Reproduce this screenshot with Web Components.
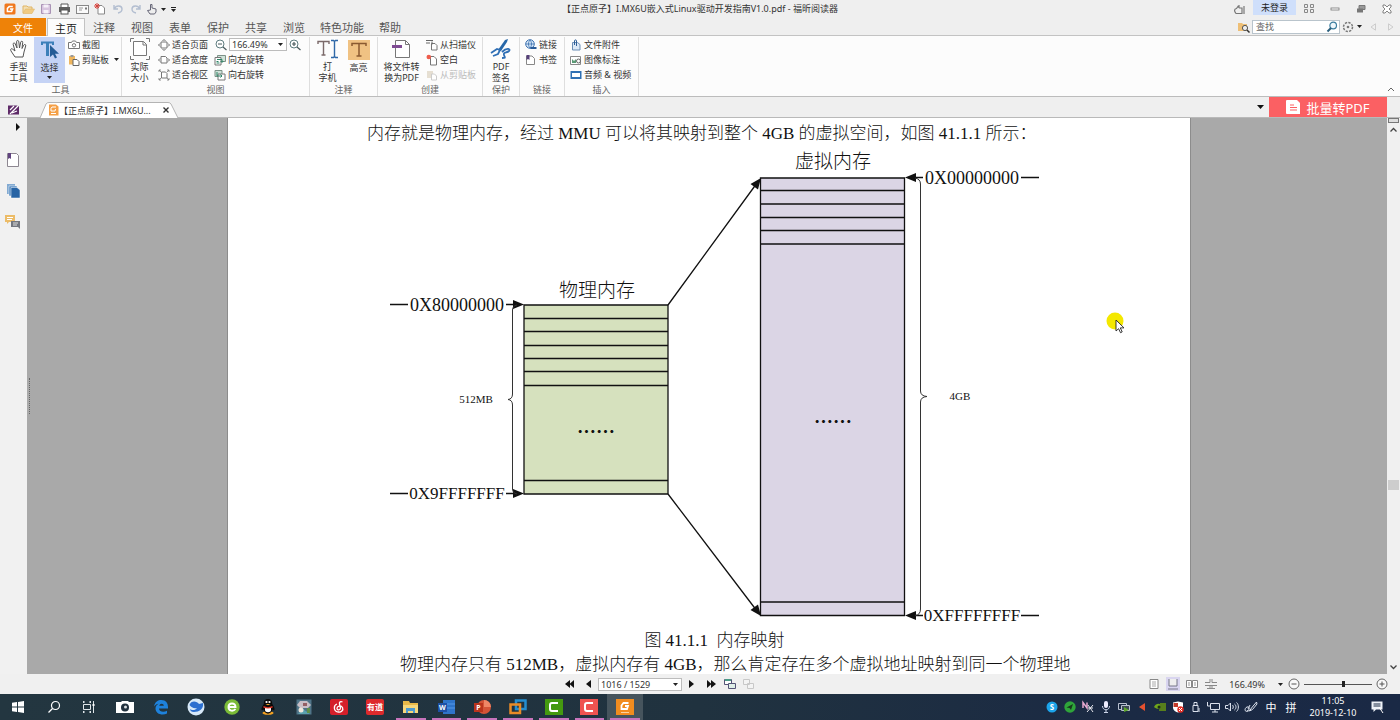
<!DOCTYPE html>
<html lang="zh-CN">
<head>
<meta charset="utf-8">
<title>【正点原子】I.MX6U嵌入式Linux驱动开发指南V1.0.pdf - 福昕阅读器</title>
<style>
html, body { height: 100%; margin: 0; }
body { overflow: hidden; font-family: "Noto Sans", "Noto Sans CJK SC", sans-serif; font-size: 9px; color: #333; }
</style>
</head>
<body>
<reader-app></reader-app>
<script>
const BASE = `
  *, *::before, *::after { box-sizing: border-box; }
  :host { display: block; box-sizing: border-box; }
  button, select, input { font: inherit; color: inherit; margin: 0; padding: 0; border: 0; background: none; line-height: inherit; border-radius: 0; }
  button { display: flex; align-items: center; justify-content: center; white-space: nowrap; }
`;
function define(name, css, html, init) {
  const template = document.createElement('template');
  template.innerHTML = `<style>${BASE}${css}</style>${html}`;
  customElements.define(name, class extends HTMLElement {
    constructor() {
      super();
      this.attachShadow({ mode: 'open' }).append(template.content.cloneNode(true));
    }
    connectedCallback() { if (init) init.call(this, this.shadowRoot); }
  });
}

/* name: [width, height, svg body] */
const ICONS = {
  foxit: [12, 12, '<rect x="0.5" y="0.5" width="11" height="11" rx="1.5" fill="#f0781e"/><path d="M8.8 3.6H5.2L3.4 5.4v3h4.2l1-2.4H6" fill="none" stroke="#fff" stroke-width="1.5"/>'],
  open: [13, 12, '<path d="M1 10V3h4l1 1h4v2" fill="#f3dfb4" stroke="#e0b565"/><path d="M1 10.500L3.500 6H12.500L10 10.500Z" fill="#f0cb84" stroke="#e0b565" stroke-width=".6"/>'],
  save: [12, 12, '<path d="M1.500 1.500h9v9h-9z" fill="#d8c5df" stroke="#a993b5"/><rect x="3.500" y="1.500" width="5" height="3" fill="#f5f0f8"/><rect x="3.500" y="7" width="5" height="3.500" fill="#f5f0f8"/>'],
  print: [13, 12, '<path d="M3 4V1h7v3" fill="#fff" stroke="#555"/><rect x="1" y="4" width="11" height="5" fill="#606060"/><rect x="3" y="7" width="7" height="4" fill="#fff" stroke="#555"/>'],
  mail: [13, 12, '<rect x=".5" y="2.500" width="12" height="8" fill="#fafafa" stroke="#888"/><path d="M3 5h4M3 7h3" stroke="#999"/><path d="M9 4.500h2v2H9z" fill="#777"/>'],
  newpdf: [12, 12, '<path d="M4 2.500h4l2.500 2.500v6h-6.500z" fill="#fff" stroke="#888"/><path d="M3 0v6M0 3h6M1 1l4 4M5 1L1 5" stroke="#d8413a"/>'],
  undo: [12, 12, '<path d="M2 2v4h4M2.500 5.500C4 2 10 2 10 6c0 2-1.500 3.500-4 4" fill="none" stroke="#b3bed0" stroke-width="1.4"/>'],
  redo: [12, 12, '<path d="M10 2v4H6M9.500 5.500C8 2 2 2 2 6c0 2 1.500 3.500 4 4" fill="none" stroke="#b3bed0" stroke-width="1.4"/>'],
  touch: [12, 12, '<path d="M4.500 7V1.500h1.500V5l4 1v3l-1.500 2H4L1.500 7.500z" fill="#eee" stroke="#667" stroke-width="1"/>'],
  down: [5, 3, '<path d="M0 0h5L2.500 3z" fill="#222"/>'],
  custom: [5, 5, '<path d="M0 .5h5" stroke="#222"/><path d="M0 2h5L2.500 5z" fill="#222"/>'],
  skin: [12, 12, '<path d="M2 10.500C0 8 0 6 2.500 5.500L4 3.500 5.500 5H8v5.500zM5 4V2M10 3v8" fill="none" stroke="#777" stroke-width="1.2"/>'],
  gridfour: [12, 10, '<path d="M1.500.5h3v3h-3zM7.500.5h3v3h-3zM1.500 5.500h3v3h-3zM7.500 5.500h3v3h-3z" fill="none" stroke="#888"/>'],
  min: [10, 10, '<rect x="1" y="4" width="8" height="2" fill="#fff" stroke="#777" stroke-width=".8"/>'],
  restore: [10, 10, '<path d="M3 1.500h6v4H3z" fill="#999" stroke="#777"/><path d="M1 4.500h6v4H1z" fill="#777"/>'],
  close: [10, 10, '<path d="M1 1h2l2 2 2-2h2v2L7 5l2 2v2H7L5 7 3 9H1V7l2-2-2-2z" fill="#fff" stroke="#666" stroke-width=".8"/>'],
  findfolder: [13, 12, '<path d="M1 10V2h4l1 1h4v7z" fill="#eebf76"/><circle cx="8" cy="7" r="2.600" fill="#eee" stroke="#555"/><path d="M10 9l2.500 2.500" stroke="#333" stroke-width="1.500"/>'],
  magnify: [12, 12, '<circle cx="7.200" cy="4.500" r="3.300" fill="#eef6fb" stroke="#3b7d9f" stroke-width="1.200"/><path d="M5 7L1.500 10.500" stroke="#2b5f7c" stroke-width="2"/>'],
  gear: [12, 12, '<circle cx="6" cy="6" r="4.500" fill="none" stroke="#777" stroke-width="1.500" stroke-dasharray="2.300 1.200"/><circle cx="6" cy="6" r="1.300" fill="#777"/>'],
  prevtri: [6, 8, '<path d="M5.500.8v6.400L1 4z" fill="none" stroke="#ccc"/>'],
  nexttri: [6, 8, '<path d="M.5.8v6.400L5 4z" fill="none" stroke="#ccc"/>'],
  hand: [20, 20, '<path d="M6 18l-4-6c-1-2 .5-3 1.700-1.800L6 12 4.200 5.500c-.4-1.800 1.500-2.200 2-.7L8 9 7.600 2.800c0-1.800 2-1.800 2.200 0L10.500 9l1.200-5.800c.4-1.600 2.300-1.200 2 .4L13 9.500l1.700-3.300c.9-1.400 2.500-.7 2 .8L15 13l-1 5z" fill="#fff" stroke="#555" stroke-width="1"/>'],
  select: [20, 20, '<path d="M1 5V1.500h13V5h-2V3.500H9V16H6V3.500H3V5z" fill="#3c7fb9"/><path d="M10 5v12l3-2.500 2 4 2-1-2-3.800h4z" fill="#255c96"/>'],
  camera: [12, 10, '<path d="M.5 2.500h3l1-1.500h3l1 1.500h3v6H.5z" fill="#fff" stroke="#777"/><circle cx="6" cy="5.300" r="1.700" fill="none" stroke="#777"/>'],
  clipboard: [12, 12, '<path d="M1 2h6v8.500H1z" fill="#efb65e"/><path d="M2.500 1h3v2h-3z" fill="#999"/><path d="M5 5.500h4l2 2v4H5z" fill="#fff" stroke="#666"/>'],
  actual: [20, 22, '<path d="M3.500 3.500h10l3 3v11h-13z" fill="#fff" stroke="#777"/><path d="M13 3.500v3.500h3.500M.5 4V.5H4M16 .5h3.500V4M.5 18v3.500H4M16 21.500h3.500V18" fill="none" stroke="#777"/>'],
  fitpage: [12, 12, '<path d="M3 3h6v6H3z" fill="#fff" stroke="#777"/><path d="M4.500 2L6 .5 7.500 2M4.500 10L6 11.500 7.500 10M2 4.500L.5 6 2 7.500M10 4.500L11.500 6 10 7.500" fill="none" stroke="#666"/>'],
  fitwidth: [12, 12, '<path d="M3 2.500h4.500l1.500 1.500v5H3z" fill="#fff" stroke="#777"/><path d="M2 4.500L.5 6 2 7.500M10 4.500L11.500 6 10 7.500" fill="none" stroke="#666"/>'],
  fitview: [12, 12, '<path d="M3.500 3h4l1.500 1.500V9H3.500z" fill="#fff" stroke="#777"/><path d="M1 1l2 2M11 1L9 3M1 11l2-2M11 11L9 9M1 3V1h2M11 3V1H9M1 9v2h2M11 9v2H9" fill="none" stroke="#777" stroke-width=".8"/>'],
  zoomout: [12, 12, '<circle cx="5" cy="5" r="4" fill="#fff" stroke="#5f7d80"/><path d="M3 5h4M8 8l3.500 3" stroke="#4a5a5c" stroke-width="1.200"/>'],
  zoomin: [12, 12, '<circle cx="5" cy="5" r="4" fill="#fff" stroke="#5f7d80"/><path d="M3 5h4M5 3v4M8 8l3.500 3" stroke="#4a5a5c" stroke-width="1.200"/>'],
  rotleft: [12, 12, '<path d="M3.500 1.500h8v6h-8z" fill="#cfe3d9" stroke="#7d9187"/><path d="M1 3.500h6v7.500H1z" fill="#fff" stroke="#777"/><path d="M3 5.500h5V8M6.500 7L8 8.500 9.500 7M2.500 7.500h2M2.500 9h3" fill="none" stroke="#2c8466"/>'],
  rotright: [12, 12, '<path d="M1 1.500h7v6H1z" fill="#cfe3d9" stroke="#7d9187"/><path d="M4 5h7v6H4z" fill="#fff" stroke="#777"/><path d="M3 3v4h5M6.500 5.500L8 7 6.500 8.500" fill="none" stroke="#2c8466"/>'],
  typewriter: [22, 20, '<path d="M1 5V2.500h11V5M6.500 2.500V16M4.500 16h4" fill="none" stroke="#7b6a6a" stroke-width="1.400"/><path d="M14 1.500h2.500l1 1 1-1H21M17.500 2v16M14 18.500h2.500l1-1 1 1H21" fill="none" stroke="#2f68a8" stroke-width="1.400"/>'],
  highlight: [24, 22, '<rect x="1" y="1" width="22" height="20" fill="#f0c283"/><path d="M5 7V4.500h14V7M12 4.500V17M9.500 17h5" fill="none" stroke="#8a5a30" stroke-width="1.500"/>'],
  topdf: [20, 20, '<path d="M3.500 1.500h10l4 4v13h-14z" fill="#fff" stroke="#777"/><path d="M13.500 1.500v4h4" fill="none" stroke="#777"/><rect x="0" y="6" width="10" height="3" fill="#7f4b93"/>'],
  scanner: [12, 12, '<path d="M5.500 4.500h3.500l2 2v4.500H5.500z" fill="#fff" stroke="#777"/><path d="M0 1.500h7M0 4h4M6 2.500v3" stroke="#666" fill="none"/>'],
  blank: [12, 12, '<path d="M4.500 2.500H8l2.500 2.500v6h-6z" fill="#fff" stroke="#777"/><circle cx="2.800" cy="3" r="2.300" fill="#ee5c4c"/>'],
  fromclip: [12, 12, '<path d="M1 2h6v7H1z" fill="#e6dfd2"/><path d="M5.500 5h3l2 2v4h-5z" fill="#fff" stroke="#ccc"/>'],
  sign: [22, 22, '<path d="M8 12L15 2l3-1-1 3-6 9z" fill="#2767a8"/><path d="M1 15l6-4 3 1-2 4-5 2M12 14c5-5 9-3 7-1s-6 1-5 4 2 3-2 3" fill="none" stroke="#2f6fb5" stroke-width="1.800"/>'],
  link: [12, 12, '<circle cx="5" cy="5" r="4.300" fill="#d9e9f8" stroke="#3a6fae"/><path d="M1 5h8M5 1c-2 2-2 6 0 8M5 1c2 2 2 6 0 8" stroke="#3a6fae" fill="none" stroke-width=".8"/><path d="M5.500 9h6" stroke="#295b98" stroke-width="2"/>'],
  bookmark: [11, 12, '<path d="M1.500 2h5.500l2.500 2.500v6h-8z" fill="#fff" stroke="#888"/><path d="M1.500 1h3v5L3 5 1.500 6z" fill="#56407a"/>'],
  attach: [12, 12, '<path d="M2.500 3.500h5l2.500 2v5.500H2.500z" fill="#dce9f7" stroke="#6a8db5"/><path d="M4.500 6V2c0-1.500 2-1.500 2 0v5" fill="none" stroke="#2f5f98"/>'],
  image: [12, 12, '<path d="M.5 2.500h10v8H.5z" fill="#fff" stroke="#888"/><path d="M2 9V5l2 2 2-2v4z" fill="#5b9b76"/><circle cx="8.500" cy="7" r="2" fill="#fff" stroke="#666"/>'],
  media: [12, 12, '<rect x=".5" y="2" width="11" height="8" fill="#2f70b3"/><rect x="2" y="4" width="8" height="4" fill="#fff"/>'],
  collapse: [8, 5, '<path d="M1 4l3-3 3 3" fill="none" stroke="#666"/>'],
  start: [13, 12, '<path d="M1 1.500h9l2 1v8H1z" fill="#5e2a68"/><path d="M3 10l8-8M3 6l4-4M5 9l5-2" stroke="#fff" stroke-width="1.200"/>'],
  docg: [11, 12, '<path d="M1 .5h7l2.500 2v9H1z" fill="#f5a046"/><path d="M8 3H4L3 4.500V7h4l.5-2M3 9.500h5" fill="none" stroke="#fff"/>'],
  x: [8, 8, '<path d="M1.500 1.500l5 5M6.500 1.500l-5 5" stroke="#333" stroke-width="1.400"/>'],
  bigdown: [7, 4, '<path d="M0 0h7L3.500 4z" fill="#111"/>'],
  pdfdoc: [14, 14, '<path d="M1 0h10l3 3v11H1a1 1 0 0 1-1-1V1a1 1 0 0 1 1-1z" fill="#fff"/><path d="M4 5h4M4 7.500h7M4 10h7" stroke="#fb6063"/>'],
  expand: [4, 8, '<path d="M0 0v8l4-4z" fill="#111"/>'],
  sidemark: [14, 16, '<path d="M1.500 1.500h9l2 2v11h-11z" fill="#fff" stroke="#8d8791"/><path d="M2 1h3v6L3.500 6 2 7z" fill="#614480"/>'],
  sidepages: [14, 16, '<path d="M1 1h8v10H1z" fill="#82aad2"/><path d="M3 3h8v10H3z" fill="#4d86c0" stroke="#fff" stroke-width=".5"/><path d="M5 4.500h6l3 2.500v8H5z" fill="#2764a5" stroke="#fff" stroke-width=".5"/>'],
  sidecomm: [16, 14, '<path d="M0 0h10v7H4L2 9V7H0z" fill="#ecbc68"/><path d="M2 2.500h6M2 4.500h5" stroke="#fff"/><path d="M6 6h9v8l-2-2H6z" fill="#73777f"/><path d="M8 8h5M8 10h4" stroke="#ddd"/>'],
  first: [10, 8, '<path d="M5 0v8L0 4zM9 0v8L4.500 4z" fill="#111"/>'],
  last: [10, 8, '<path d="M1 0v8l4.500-4zM5 0v8l5-4z" fill="#111"/>'],
  prev: [5, 8, '<path d="M5 0v8L0 4z" fill="#111"/>'],
  next: [5, 8, '<path d="M0 0v8l5-4z" fill="#111"/>'],
  viewback: [12, 12, '<path d="M.5 1.500h7v5h-7z" fill="#fff" stroke="#557"/><path d="M4.500 5.500h7v5h-7z" fill="#dfeee8" stroke="#557"/><path d="M1 2h6" stroke="#4a9a86" stroke-width="2"/>'],
  viewfwd: [12, 12, '<path d="M.5 1.500h6v5h-6zM4.500 5.500h6v5h-6z" fill="#f4f4f4" stroke="#c8c8c8"/>'],
  single: [10, 12, '<path d="M1 1.500h8v9H1z" fill="#fff" stroke="#888"/><path d="M3 4h4M3 6h4M3 8h4" stroke="#aaa"/>'],
  cont: [14, 14, '<rect width="14" height="14" fill="#d9d5f0"/><path d="M3 2v7h8V2" fill="#eee" stroke="#778"/><path d="M2 12h10" stroke="#778"/>'],
  facing: [12, 12, '<path d="M.5 2.500H5.500v7H.5zM6.500 2.500h5v7h-5z" fill="#fff" stroke="#888"/><path d="M2 5h2M2 7h2M8 5h2M8 7h2" stroke="#999"/>'],
  contfacing: [12, 12, '<path d="M0 4.500h5V1M12 4.500H7V1M0 7.500h12M5 8v3M7 8v3M2 10.500h8" fill="none" stroke="#888"/>'],
  minus: [12, 12, '<circle cx="6" cy="6" r="5" fill="#f8f8f8" stroke="#666"/><path d="M3.500 6h5" stroke="#555"/>'],
  plus: [12, 12, '<circle cx="6" cy="6" r="5" fill="#f8f8f8" stroke="#666"/><path d="M3.500 6h5M6 3.500v5" stroke="#555"/>'],
  scrollup: [9, 6, '<path d="M1.500 4.500L4.500 1.500l3 3" fill="none" stroke="#444" stroke-width="1.300"/>'],
  scrolldown: [9, 6, '<path d="M1.500 1.500L4.500 4.500l3-3" fill="none" stroke="#444" stroke-width="1.300"/>'],
  windows: [14, 14, '<path d="M1 2.800l5-.7v4.400H1zM7 2l6-.9v5.400H7zM1 7.500h5v4.400l-5-.7zM7 7.500h6V13l-6-.9z" fill="#fff"/>'],
  tsearch: [14, 14, '<circle cx="8.500" cy="5.500" r="4" fill="none" stroke="#fff" stroke-width="1.200"/><path d="M5.500 8.500L1.500 12.500" stroke="#fff" stroke-width="1.300"/>'],
  taskview: [14, 14, '<path d="M1.500 4.500h7v5h-7zM1 2h2M7 2h2M1 12h2M7 12h2M1.500 1v2M8.500 1v2M1.500 11v2M8.500 11v2M11.500 1v12" fill="none" stroke="#dfe5e9"/><path d="M10.500 4h2v2h-2z" fill="#fff"/>'],
  tcamera: [18, 14, '<path d="M0 2h5l1-1h6l1 1h5v11H0z" fill="#fff"/><circle cx="9" cy="7.500" r="4" fill="#22323f"/><circle cx="9.500" cy="7" r="1.500" fill="#d9dee2"/>'],
  edge: [16, 16, '<path d="M1 7.500C2 2.500 5 1 8.300 1 13 1 15 4.300 15 8v1.500H6c.2 3.500 4.800 4 8 2.200V14.500c-5 2.500-11.500.3-11.500-5 0-2 1-3.700 3-4.700C3.500 5 2 6.200 1 7.500zM6.200 6.800h4.600C10.800 4 6.800 4 6.200 6.800z" fill="#1e82dc"/>'],
  swirl: [18, 18, '<circle cx="9" cy="9" r="8.500" fill="#d7e9f8"/><path d="M2.500 7C4 2 10 3 12 6l4-1c1 6-4 9-9 9-3 0-4-2-4-3 2 2 6 1 7-1-3 1-6-1-7.500-3z" fill="#2b6fd0"/>'],
  green: [16, 16, '<circle cx="8" cy="8" r="7.700" fill="#7bbb37"/><path d="M4.500 8h7c0-5-7-4.500-7 0 0 4.500 5 4.500 7 2" fill="none" stroke="#fff" stroke-width="1.900"/>'],
  qq: [14, 16, '<ellipse cx="7" cy="14" rx="5.500" ry="1.800" fill="#f2a122"/><path d="M7 0c3.500 0 4.300 2.500 4.200 5 1.500 2 3.300 5.500 1.800 6.500l-1.500-1C10 16 4 16 2.500 10.500L1 11.500C-.5 10 1.500 7 2.800 5 2.700 2.500 3.500 0 7 0z" fill="#0a0a0a"/><path d="M4 9h6v2c0 3-6 3-6 0z" fill="#fff"/><circle cx="5.500" cy="3" r="1.100" fill="#fff"/><circle cx="8.500" cy="3" r="1.100" fill="#fff"/><path d="M4.500 5h5L7 6.300z" fill="#f5a623"/><path d="M2.500 7c3 1.500 6 1.500 9 0v1.800c-3 1-6 1-9 0z" fill="#dc3427"/>'],
  photo: [16, 16, '<rect x=".5" y=".5" width="15" height="15" fill="#4f7488"/><path d="M1 6l3-4h7l4 4-3 3H4z" fill="#c9bfc6"/><path d="M2 15l5-5 7 5z" fill="#5ba2af"/><circle cx="5" cy="11" r="2.500" fill="#efe7db"/><path d="M7 4h4v3H7z" fill="#945f63"/><path d="M11 9h3v5h-3z" fill="#5e8f4a"/>'],
  netease: [18, 16, '<rect width="18" height="16" rx="2" fill="#d51f2a"/><path d="M12.500 3c-2-1-3.500 0-3 2l1 4c0 2.500-3.500 2.500-3.500.3C7 7 11 6 12.500 8.500c1.300 3-1.500 4.800-4 4.500C3 12.500 3.500 6 7 5" fill="none" stroke="#fff" stroke-width="1.300"/>'],
  youdao: [18, 16, '<rect width="18" height="16" rx="2" fill="#dd2a2c"/><text x="9" y="11" font-size="8" font-weight="700" text-anchor="middle" fill="#fff">有道</text>'],
  explorer: [17, 14, '<path d="M1 1h6l1 2h8v10H1z" fill="#e9b949"/><path d="M1 5h15v8H1z" fill="#f6d77c"/><path d="M4 8h9v5h-2v-2H6v2H4z" fill="#4e9bd1"/>'],
  word: [17, 14, '<rect x="5" y="0" width="12" height="14" fill="#2e74ca"/><path d="M5 4h12M5 8h12" stroke="#5598e8"/><rect x="0" y="3" width="9" height="9" fill="#1d50a6"/><text x="4.500" y="10" font-size="7" font-weight="700" text-anchor="middle" fill="#fff">W</text>'],
  ppt: [17, 14, '<circle cx="10" cy="7" r="7" fill="#d45437"/><path d="M10 0a7 7 0 0 1 7 7h-7z" fill="#ef8665"/><rect x="0" y="3" width="9" height="9" fill="#b9341c"/><text x="4.500" y="10" font-size="7" font-weight="700" text-anchor="middle" fill="#fff">P</text>'],
  vmware: [18, 16, '<path d="M7 1.500h9.500V10H7z" fill="none" stroke="#258ed0" stroke-width="2.500"/><path d="M1.500 5.500H11V14H1.500z" fill="none" stroke="#e98b26" stroke-width="2.500"/>'],
  camgreen: [18, 16, '<rect width="18" height="16" fill="#44990f"/><path d="M13 4H7Q5 4 5 6v4q0 2 2 2h6" fill="none" stroke="#fff" stroke-width="2"/>'],
  camred: [18, 16, '<rect width="18" height="16" fill="#ef5350"/><path d="M13 4H7Q5 4 5 6v4q0 2 2 2h6" fill="none" stroke="#fff" stroke-width="2"/>'],
  foxbig: [18, 16, '<rect width="18" height="16" fill="#f28c1f"/><path d="M12.500 4H7.500L5.500 6.500V10h5.500l1-3H9" fill="none" stroke="#fff" stroke-width="1.800"/><path d="M5 13.500h8" stroke="#fbd2a2"/>'],
  skype: [12, 12, '<circle cx="6" cy="6" r="5.500" fill="#1ca4ea"/><text x="6" y="9" font-size="8" font-weight="700" text-anchor="middle" fill="#fff">S</text>'],
  tgreen: [12, 12, '<circle cx="6" cy="6" r="5.700" fill="#2fa43a"/><path d="M2.500 6.500L9 3 7 9 5.500 7z" fill="#16391b"/>'],
  tn: [12, 12, '<path d="M1 7V1.500L5 7V1.500" fill="none" stroke="#e8a9d0" stroke-width="1.500"/><path d="M6 4l5 7M11 4L5 11M6 7h5" stroke="#e8e8ee"/>'],
  mic: [10, 12, '<rect x="3" y="0" width="4" height="7" rx="2" fill="#eef"/><path d="M1.500 5c0 5 7 5 7 0M5 9v3M3 11.500h4" fill="none" stroke="#ccd5e8"/>'],
  screens: [12, 12, '<path d="M.5 2.500h8v6h-8z" fill="none" stroke="#b8c0cf"/><path d="M3.500 4.500h8v5h-8z" fill="#3b4a55" stroke="#b8c0cf"/><path d="M6 6l5 3-5 2z" fill="#5ca629"/>'],
  redtri: [8, 10, '<path d="M7 1v8L1 5z" fill="#e5512f"/>'],
  nvidia: [12, 10, '<path d="M0 5c2-4 6-4 8-1-1 3-5 4-8 1z" fill="#6fa51c"/><path d="M6 1h6v8H5" fill="#587f1c"/><circle cx="5" cy="5" r="1.500" fill="#1c2d14"/>'],
  shield: [12, 12, '<path d="M1 1.500l5-1 5 1v5c0 3-3 4.500-5 5-2-.5-5-2-5-5z" fill="#fff"/><path d="M1.500 2H6v4H1.500z" fill="#c33a2a"/><circle cx="8.500" cy="8.500" r="3.200" fill="#e32f26"/><path d="M7 7l3 3M10 7l-3 3" stroke="#fff"/>'],
  usb: [10, 12, '<path d="M2 4.500h5v6H2zM3 4.500v-3h3v3M8 7v4" fill="none" stroke="#dbe1ec"/>'],
  net: [14, 12, '<path d="M3.500 2.500h9v6h-9zM8 8.500V11M5 11h6M.5 1v4h3" fill="none" stroke="#dbe1ec"/>'],
  volume: [14, 12, '<path d="M.5 4.500H3l2.500-2.500v8L3 7.500H.5z" fill="none" stroke="#dbe1ec"/><path d="M7.500 4c1 1 1 3 0 4M9.500 3c2 1.500 2 4.500 0 6M11.500 1.500c2.500 2 2.500 7 0 9" fill="none" stroke="#dbe1ec"/>'],
  pen: [14, 12, '<path d="M12.500 1l-5 6-2 3 3-1.500L13 3zM6 9C0 13 0 7 3 6s3 3 0 4M6 4L4 8" fill="none" stroke="#dbe1ec"/>'],
  notify: [14, 14, '<path d="M1.500 1.500h11v8H6L3.500 12V9.500h-2z" fill="#eef2f8"/><path d="M3.500 4h7M3.500 6h7" stroke="#1b2a44"/><path d="M9 7l4 6" stroke="#fff"/>'],
  pointer: [20, 24, '<circle cx="9" cy="9" r="8.500" fill="#f4e800"/><path d="M10 8v11l2.600-2.300 1.900 4 1.700-.8-1.900-4H18z" fill="#fff" stroke="#222" stroke-width=".9"/>']
};
define('ui-icon', `
  :host { display: inline-flex; flex: none; align-items: center; justify-content: center; }
  svg { display: block; overflow: visible; }
`, '<svg aria-hidden="true"></svg>', function (root) {
  const [w, h, body] = ICONS[this.getAttribute('name')];
  const svg = root.querySelector('svg');
  svg.setAttribute('width', w);
  svg.setAttribute('height', h);
  svg.setAttribute('viewBox', `0 0 ${w} ${h}`);
  svg.innerHTML = body;
});

function fillIcon(host, root) {
  root.querySelector('.pic').innerHTML = `<ui-icon name="${host.getAttribute('icon')}"></ui-icon>`;
}

/* Icon-only button; --w sets its width */
define('icon-button', `
  :host { display: flex; flex: none; width: var(--w, 18px); align-items: stretch; }
  button { width: 100%; gap: 3px; }
  .pic { display: flex; }
`, '<button><span class="pic"></span><slot></slot></button>', function (root) {
  fillIcon(this, root);
  root.querySelector('button').setAttribute('aria-label', this.getAttribute('label') || this.getAttribute('icon'));
});

define('title-bar', `
  :host { display: grid; grid-template-columns: 1fr auto 1fr; height: 18px; background: #efefef; }
  div { display: flex; align-items: stretch; }
  .quick { padding-left: 1px; }
  .touch { --w: 22px; }
  .custom { --w: 12px; }
  .end { justify-content: flex-end; }
  h1 { margin: 0; font-size: 9px; font-weight: 400; line-height: 18px; white-space: nowrap; }
  .login { width: 43px; height: 15px; background: #cfdffb; color: #222; }
  .win { --w: 26px; }
`, `
  <div class="quick">
    <icon-button icon="foxit"></icon-button><icon-button icon="open"></icon-button><icon-button icon="save"></icon-button><icon-button icon="print"></icon-button><icon-button icon="mail"></icon-button><icon-button icon="newpdf"></icon-button><icon-button icon="undo"></icon-button><icon-button icon="redo"></icon-button>
    <icon-button class="touch" icon="touch"><ui-icon name="down"></ui-icon></icon-button><icon-button class="custom" icon="custom"></icon-button>
  </div>
  <h1>【正点原子】I.MX6U嵌入式Linux驱动开发指南V1.0.pdf - 福昕阅读器</h1>
  <div class="end">
    <icon-button class="win" icon="skin"></icon-button>
    <button class="login">未登录</button>
    <icon-button class="win" icon="gridfour"></icon-button><icon-button class="win" icon="min"></icon-button><icon-button class="win" icon="restore"></icon-button><icon-button class="win" icon="close"></icon-button>
  </div>`);

define('ribbon-tabs', `
  :host { display: flex; height: 18px; background: #efefef; border-bottom: 1px solid #c3c3c3; font-size: 11px; }
  nav { display: flex; height: 18px; }
  button { min-width: 38px; padding: 0 7px; color: #555; }
  .file { width: 46px; margin-right: 1px; background: #ee8208; color: #fff; font-size: 10px; }
  .on { background: #fcfcfc; color: #222; border: 1px solid #c3c3c3; border-bottom: 0; }
  .tools { display: flex; margin-left: auto; align-items: center; }
  .search { display: flex; width: 88px; height: 14px; align-items: center; background: #fff; border: 1px solid #b9c4cc; padding: 0 1px 0 3px; font-size: 9px; }
  .search input { flex: 1; min-width: 0; height: 12px; outline: 0; }
  .search input::placeholder { color: #666; opacity: 1; }
  .set { --w: 24px; }
`, `
  <nav><button class="file">文件</button><button class="on">主页</button><button>注释</button><button>视图</button><button>表单</button><button>保护</button><button>共享</button><button>浏览</button><button>特色功能</button><button>帮助</button></nav>
  <div class="tools">
    <icon-button icon="findfolder"></icon-button>
    <label class="search"><input type="text" placeholder="查找" aria-label="查找"><ui-icon name="magnify"></ui-icon></label>
    <icon-button class="set" icon="gear"><ui-icon name="down"></ui-icon></icon-button>
    <icon-button icon="prevtri"></icon-button><icon-button icon="nexttri"></icon-button>
  </div>`);

define('ribbon-group', `
  :host { display: flex; flex: none; flex-direction: column; width: var(--w); border-right: 1px solid #dedede; }
  .body { display: flex; height: 46px; padding-left: var(--pad, 0); }
  .title { line-height: 13px; text-align: center; color: #666; }
`, '<div class="body"><slot></slot></div><div class="title"></div>', function (root) {
  root.querySelector('.title').textContent = this.getAttribute('label');
});

define('big-button', `
  :host { display: flex; flex: none; width: var(--w, 30px); }
  button { flex: 1; flex-direction: column; justify-content: flex-start; line-height: 11px; }
  .pic { display: flex; height: 25px; align-items: center; }
  :host([active]) button { background: #c5d3f5; }
  .more { display: none; height: 9px; align-items: center; }
  :host([menu]) .more { display: flex; }
`, '<button><span class="pic"></span><slot></slot><span class="more"><ui-icon name="down"></ui-icon></span></button>', function (root) {
  fillIcon(this, root);
});

define('small-button', `
  :host { display: flex; height: 15px; }
  :host([disabled]) { color: #bbb; }
  button { gap: 2px; }
  .pic { display: flex; width: 13px; justify-content: center; }
  .more { display: none; padding-left: 3px; }
  :host([menu]) .more { display: flex; }
`, '<button><span class="pic"></span><slot></slot><span class="more"><ui-icon name="down"></ui-icon></span></button>', function (root) {
  fillIcon(this, root);
  root.querySelector('button').disabled = this.hasAttribute('disabled');
});

define('combo-box', `
  :host { display: flex; flex: none; position: relative; width: var(--w); height: 13px; align-items: center; border: 1px solid #bcbcbc; background: #fff; }
  select { appearance: none; width: 100%; height: 11px; line-height: 11px; padding-left: 2px; outline: 0; }
  ui-icon { position: absolute; right: 3px; pointer-events: none; }
`, '<select><option></option></select><ui-icon name="down"></ui-icon>', function (root) {
  root.querySelector('option').textContent = this.getAttribute('value');
  root.querySelector('select').setAttribute('aria-label', this.getAttribute('label'));
});

define('ribbon-bar', `
  :host { display: flex; height: 61px; padding-top: 1px; background: #fcfcfc; border-bottom: 1px solid #bcbcbc; }
  .col { display: flex; flex-direction: column; }
  .row { display: flex; height: 15px; align-items: center; }
  .g1 { --w: 122px; --pad: 3px; } .g2 { --w: 188px; --pad: 2px; } .g3 { --w: 68px; --pad: 2px; }
  .g4 { --w: 105px; } .g5 { --w: 37px; } .g6 { --w: 45px; --pad: 4px; } .g7 { --w: 74px; --pad: 4px; }
  big-button { --w: 31px; }
  .wide { --w: 47px; } .sig { --w: 36px; }
  .zoom { --w: 58px; }
  .c1 { padding-left: 2px; } .c3 { padding-left: 5px; }
  .row icon-button { --w: 16px; }
  .fold { margin-left: auto; align-self: flex-end; height: 14px; }
`, `
  <ribbon-group class="g1" label="工具">
    <big-button icon="hand">手型<br>工具</big-button><big-button icon="select" active menu>选择</big-button>
    <div class="col c1"><small-button icon="camera">截图</small-button><small-button icon="clipboard" menu>剪贴板</small-button></div>
  </ribbon-group>
  <ribbon-group class="g2" label="视图">
    <big-button icon="actual">实际<br>大小</big-button>
    <div class="col c1"><small-button icon="fitpage">适合页面</small-button><small-button icon="fitwidth">适合宽度</small-button><small-button icon="fitview">适合视区</small-button></div>
    <div class="col c3">
      <div class="row"><icon-button icon="zoomout"></icon-button><combo-box class="zoom" value="166.49%" label="缩放"></combo-box><icon-button icon="zoomin"></icon-button></div>
      <small-button icon="rotleft">向左旋转</small-button><small-button icon="rotright">向右旋转</small-button>
    </div>
  </ribbon-group>
  <ribbon-group class="g3" label="注释"><big-button icon="typewriter">打<br>字机</big-button><big-button icon="highlight">高亮</big-button></ribbon-group>
  <ribbon-group class="g4" label="创建">
    <big-button class="wide" icon="topdf">将文件转<br>换为PDF</big-button>
    <div class="col"><small-button icon="scanner">从扫描仪</small-button><small-button icon="blank">空白</small-button><small-button icon="fromclip" disabled>从剪贴板</small-button></div>
  </ribbon-group>
  <ribbon-group class="g5" label="保护"><big-button class="sig" icon="sign">PDF<br>签名</big-button></ribbon-group>
  <ribbon-group class="g6" label="链接"><div class="col"><small-button icon="link">链接</small-button><small-button icon="bookmark">书签</small-button></div></ribbon-group>
  <ribbon-group class="g7" label="插入"><div class="col"><small-button icon="attach">文件附件</small-button><small-button icon="image">图像标注</small-button><small-button icon="media">音频 &amp; 视频</small-button></div></ribbon-group>
  <icon-button class="fold" icon="collapse"></icon-button>`);

define('doc-tabs', `
  :host { display: flex; height: 21px; padding-right: 13px; background: #efefef; border-bottom: 1px solid #b9b9b9; }
  .home { --w: 26px; padding-top: 6px; }
  .tab { display: flex; position: relative; width: 138px; height: 16px; margin: 5px 0 0 14px; padding: 0 7px 0 8px; align-items: center; }
  .shape { position: absolute; inset: 0; width: 100%; height: 100%; }
  .tab ui-icon, .tab span, .tab icon-button { position: relative; }
  .tab span { flex: 1; white-space: nowrap; }
  .tab icon-button { --w: 10px; }
  .list { margin-left: auto; }
  .convert { width: 118px; height: 20px; gap: 6px; background: #fb6063; color: #fff; font-size: 13px; }
`, `
  <icon-button class="home" icon="start"></icon-button>
  <div class="tab">
    <svg class="shape" viewBox="0 0 138 16" preserveAspectRatio="none" aria-hidden="true"><path d="M0 16L6 2Q7 .5 9 .5H128Q130 .5 131 2L138 16" fill="#fff" stroke="#b4b4b4"/></svg>
    <ui-icon name="docg"></ui-icon><span>【正点原子】I.MX6U...</span><icon-button icon="x" label="关闭"></icon-button>
  </div>
  <icon-button class="list" icon="bigdown"></icon-button>
  <button class="convert"><ui-icon name="pdfdoc"></ui-icon>批量转PDF</button>`);

define('side-panel', `
  :host { display: flex; flex: none; flex-direction: column; width: 27px; background: #f1f1f1; }
  icon-button { --w: 26px; height: 31px; }
  .expand { height: 17px; margin-bottom: 9px; padding-left: 9px; }
`, '<icon-button class="expand" icon="expand"></icon-button><icon-button icon="sidemark"></icon-button><icon-button icon="sidepages"></icon-button><icon-button icon="sidecomm"></icon-button>');

define('memory-map', `
  svg { display: block; }
  text { font-family: "Liberation Serif", "Noto Sans CJK SC", serif; font-weight: 300; fill: #111; text-anchor: middle; }
  .name { font-size: 19px; }
  .addr { font-size: 18px; }
  .long { font-size: 17px; }
  .size { font-size: 11px; }
  .dots { font-family: "Noto Sans CJK SC", sans-serif; font-size: 19px; font-weight: 700; }
  .line { fill: none; stroke: #111; stroke-width: 1.3; }
  .brace { fill: none; stroke: #333; }
`, `
  <svg width="695" height="485" viewBox="367 144 695 485" role="img" aria-label="内存映射">
    <path d="M524 305H668V494H524z" fill="#d6e1be"/>
    <path d="M760.500 178H904.500V615.500H760.500z" fill="#dbd5e5"/>
    <path class="line" d="M524 305H668V494H524zM524 318.500H668M524 331.500H668M524 345.500H668M524 358.500H668M524 371.500H668M524 385.500H668M524 480.500H668"/>
    <path class="line" d="M760.500 178H904.500V615.500H760.500zM760.500 190.500H904.500M760.500 204H904.500M760.500 217.500H904.500M760.500 230.500H904.500M760.500 244H904.500M760.500 602H904.500"/>
    <path class="line" d="M668 305L757 183M668 494L757 611M390 304.500H408M506 304.500H516M390 493.500H408M506 493.500H516M912 177.500H923M1021 177.500H1039M912 615.500H923M1021 615.500H1039"/>
    <path d="M524 304.500L513 300V309zM524 493.500L513 489V498zM905 177.500L916 173V182zM905 615.500L916 611V620zM761 178L750.500 184 758 189.500zM761 616L750.500 610 758 604.500z" fill="#111"/>
    <path class="brace" d="M517 305Q512.500 306 512.500 310V394Q512.500 399 508 399.500Q512.500 400 512.500 405V489Q512.500 493 517 494"/>
    <path class="brace" d="M915 178Q920.500 179 920.500 184V391Q920.500 396 927 396.500Q920.500 397 920.500 402V609Q920.500 615 915 615.500"/>
    <text class="name" x="597" y="297">物理内存</text>
    <text class="name" x="833" y="168">虚拟内存</text>
    <text class="addr" x="457" y="311">0X80000000</text>
    <text class="addr long" x="457" y="499">0X9FFFFFFF</text>
    <text class="addr" x="972" y="184">0X00000000</text>
    <text class="addr long" x="972" y="621">0XFFFFFFFF</text>
    <text class="size" x="476" y="403">512MB</text>
    <text class="size" x="960" y="400">4GB</text>
    <text class="dots" x="596" y="439">……</text>
    <text class="dots" x="833" y="429">……</text>
  </svg>`);

define('pdf-viewer', `
  :host { display: flex; flex: 1; min-width: 0; background: #a9a9a9; }
  .grip { display: flex; width: 4px; align-items: center; justify-content: center; }
  .grip i { width: 1px; height: 36px; border-left: 1px dotted #666; }
  .canvas { flex: 1; min-width: 0; overflow: hidden; display: flex; justify-content: center; }
  article { position: relative; flex: none; width: 962px; padding: 6px 128px 0 139px; background: #fff; box-shadow: -1px 0 #8c8c8c, 1px 0 #8c8c8c; color: #111;
    font-family: "Liberation Serif", "Noto Sans CJK SC", serif; font-weight: 300; font-size: 17px; }
  p { margin: 0; line-height: 24px; white-space: nowrap; }
  .lead { line-height: 20px; }
  .caption { text-align: center; }
  .indent { padding-left: 33px; }
  .cursor { position: absolute; left: 878px; top: 194px; }
  .bar { display: flex; flex-direction: column; flex: none; width: 13px; background: #f0f0f0; align-items: center; }
  .split { width: 11px; height: 5px; border: 1px solid #777; background: #ddd; }
  .bar icon-button { --w: 13px; height: 14px; }
  .track { flex: 1; width: 11px; display: flex; flex-direction: column; }
  .track::before { content: ""; flex: 342; }
  .track::after { content: ""; flex: 170; }
  .thumb { height: 10px; background: #cdcdcd; }
`, `
  <div class="grip"><i></i></div>
  <div class="canvas">
    <article>
      <p class="lead">内存就是物理内存，经过 MMU 可以将其映射到整个 4GB 的虚拟空间，如图 41.1.1 所示：</p>
      <memory-map></memory-map>
      <p class="caption">图 41.1.1&nbsp; 内存映射</p>
      <p class="indent">物理内存只有 512MB，虚拟内存有 4GB，那么肯定存在多个虚拟地址映射到同一个物理地</p>
      <ui-icon class="cursor" name="pointer"></ui-icon>
    </article>
  </div>
  <div class="bar"><div class="split"></div><icon-button icon="scrollup"></icon-button><div class="track"><div class="thumb"></div></div><icon-button icon="scrolldown"></icon-button></div>`);

define('status-bar', `
  :host { display: flex; height: 20px; padding: 0 12px 0 40%; align-items: center; background: #f0f0f0; }
  icon-button { --w: 19px; height: 20px; }
  .page { --w: 84px; }
  .end { display: flex; margin-left: auto; align-items: center; }
  .zoom { padding: 0 4px 0 9px; gap: 13px; }
  input { appearance: none; width: 68px; height: 12px; margin: 0 3px 0 4px; background: linear-gradient(#555, #555) center / 100% 1px no-repeat; }
  input::-webkit-slider-thumb { appearance: none; width: 3px; height: 6px; background: #222; }
  .step { --w: 13px; }
`, `
  <icon-button icon="first"></icon-button><icon-button icon="prev"></icon-button>
  <combo-box class="page" value="1016 / 1529" label="页码"></combo-box>
  <icon-button icon="next"></icon-button><icon-button icon="last"></icon-button><icon-button icon="viewback"></icon-button><icon-button icon="viewfwd"></icon-button>
  <div class="end">
    <icon-button icon="single"></icon-button><icon-button icon="cont"></icon-button><icon-button icon="facing"></icon-button><icon-button icon="contfacing"></icon-button>
    <button class="zoom">166.49%<ui-icon name="down"></ui-icon></button>
    <icon-button class="step" icon="minus"></icon-button><input type="range" min="0" max="100" value="58" aria-label="缩放比例"><icon-button class="step" icon="plus"></icon-button>
  </div>`);

define('task-bar', `
  :host { display: flex; height: 26px; background: linear-gradient(90deg, #233640, #20323f 50%, #1b2a44 80%, #1a2945); color: #fff; }
  .apps { display: grid; width: 643px; grid-auto-flow: column; grid-auto-columns: 1fr; }
  .apps icon-button { --w: auto; }
  .run { padding-top: 2px; border-bottom: 2px solid; border-image: linear-gradient(90deg, transparent 10%, #c874bc 10%, #c874bc 90%, transparent 90%) 1; border-image-width: 0 0 2px; }
  .now { background: #46545d; }
  .tray { display: flex; margin-left: auto; }
  .tray button { width: 20px; font-size: 11px; }
  .wide { --w: 20px; }
  .clock { width: 64px; display: flex; flex-direction: column; align-items: center; justify-content: center; line-height: 12px; font-size: 9px; }
  .note { --w: 24px; margin-right: 11px; }
`, `
  <div class="apps">
    <icon-button icon="windows"></icon-button><icon-button icon="tsearch"></icon-button><icon-button icon="taskview"></icon-button><icon-button icon="tcamera"></icon-button><icon-button icon="edge"></icon-button><icon-button icon="swirl"></icon-button><icon-button icon="green"></icon-button><icon-button icon="qq"></icon-button><icon-button icon="photo"></icon-button><icon-button icon="netease"></icon-button><icon-button icon="youdao"></icon-button>
    <icon-button class="run" icon="explorer"></icon-button><icon-button class="run" icon="word"></icon-button><icon-button class="run" icon="ppt"></icon-button><icon-button class="run" icon="vmware"></icon-button><icon-button class="run" icon="camgreen"></icon-button><icon-button class="run" icon="camred"></icon-button><icon-button class="run now" icon="foxbig"></icon-button>
  </div>
  <div class="tray">
    <icon-button icon="skype"></icon-button><icon-button icon="tgreen"></icon-button><icon-button icon="tn"></icon-button><icon-button icon="mic"></icon-button><icon-button icon="screens"></icon-button><icon-button icon="redtri"></icon-button><icon-button icon="nvidia"></icon-button><icon-button icon="shield"></icon-button><icon-button icon="usb"></icon-button><icon-button icon="net"></icon-button><icon-button icon="volume"></icon-button>
    <icon-button class="wide" icon="pen"></icon-button><button>中</button><button>拼</button>
    <div class="clock"><span>11:05</span><span>2019-12-10</span></div>
    <icon-button class="note" icon="notify"></icon-button>
  </div>`);

define('reader-app', `
  :host { display: flex; flex-direction: column; height: 100vh; }
  title-bar, ribbon-tabs, ribbon-bar, doc-tabs, status-bar, task-bar { flex: none; }
  main { display: flex; flex: 1; min-height: 0; }
`, `
  <title-bar></title-bar><ribbon-tabs></ribbon-tabs><ribbon-bar></ribbon-bar><doc-tabs></doc-tabs>
  <main><side-panel></side-panel><pdf-viewer></pdf-viewer></main>
  <status-bar></status-bar><task-bar></task-bar>`);
</script>
</body>
</html>
